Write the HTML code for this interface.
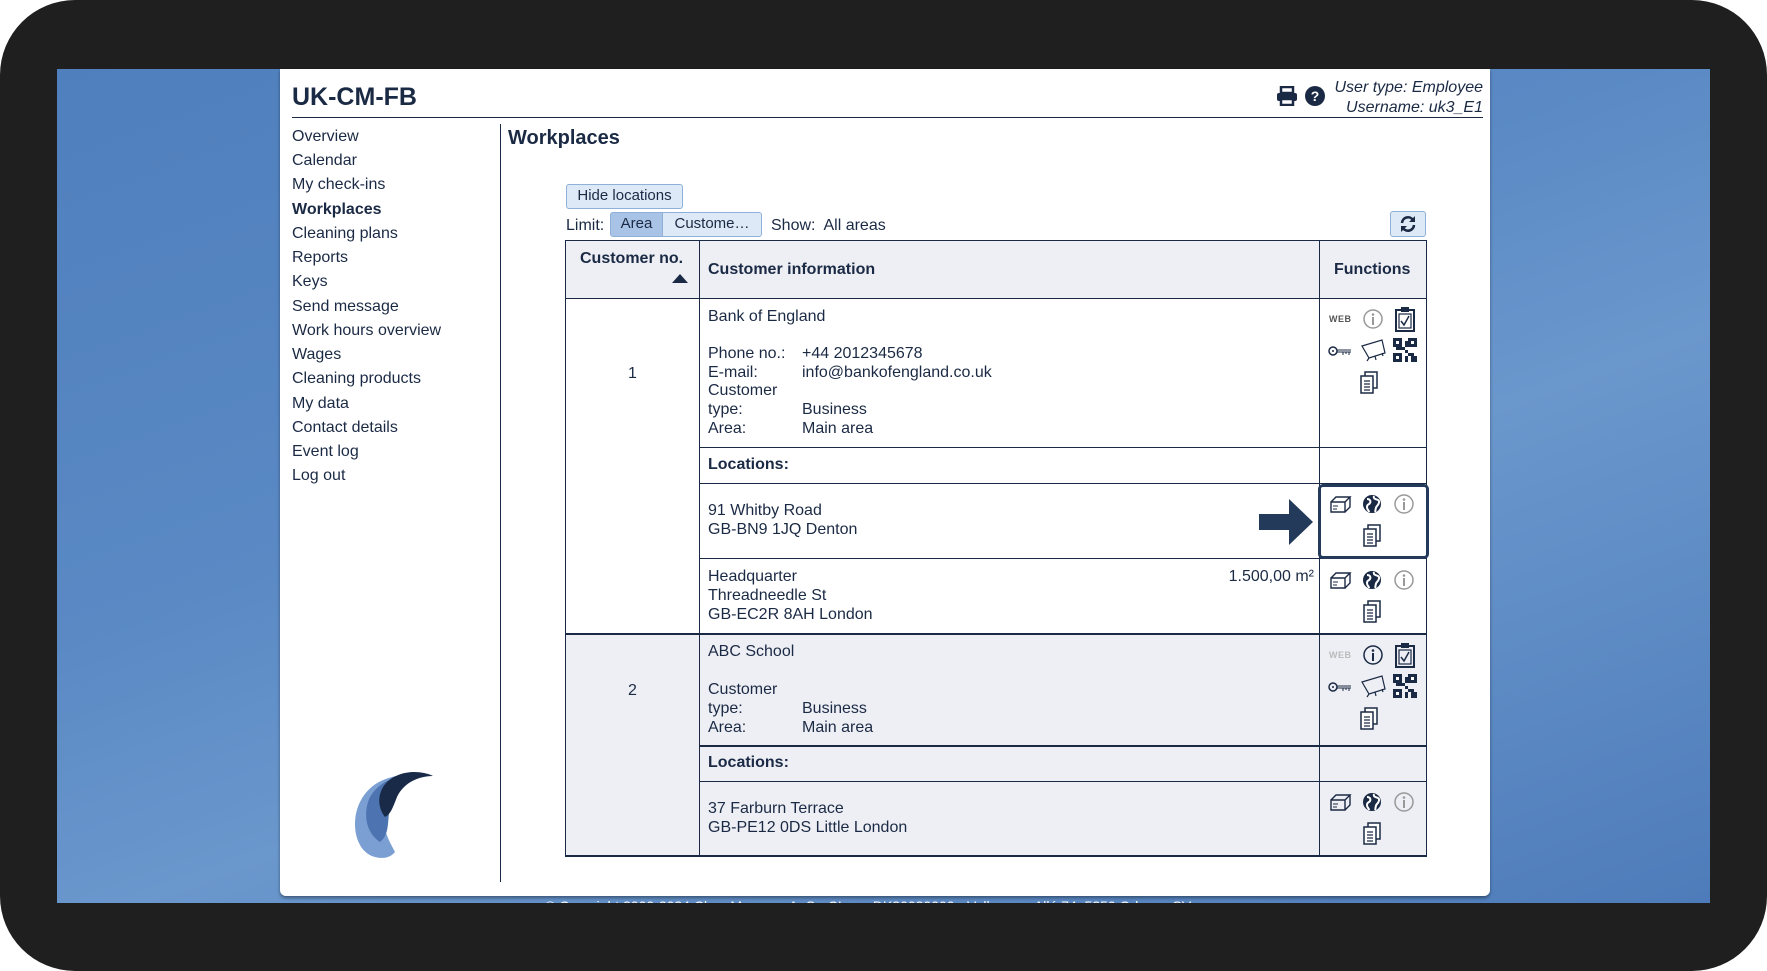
<!DOCTYPE html><html><head><meta charset="utf-8"><style>
*{margin:0;padding:0;box-sizing:border-box}
body{width:1767px;height:971px;background:#fff;position:relative;overflow:hidden;font-family:"Liberation Sans",sans-serif;color:#1b2a44}
.frame{position:absolute;left:0;top:0;width:1767px;height:971px;background:#201f20;border-radius:75px}
.blue{position:absolute;left:57px;top:69px;width:1653px;height:834px;overflow:hidden;background:linear-gradient(160deg,#4f7fbd 0%,#5a89c4 40%,#6a97cc 60%,#4e7cba 100%)}
.panel{position:absolute;left:280px;top:69px;width:1210px;height:827px;background:#fff;border-radius:0 0 6px 6px;box-shadow:0 2px 3px rgba(0,0,0,.4)}
.a{position:absolute;white-space:nowrap;font-size:16px;line-height:19px}
.t .a{transform:translateY(1px)}
.b{font-weight:bold}
.hl{position:absolute;background:#1b2a44}
.btn{position:absolute;border:1px solid #8fb0d8;background:#dde9f7;border-radius:3px;font-size:15px;line-height:22px;text-align:center}
.ic{position:absolute}
</style></head><body>
<div class="frame"></div>
<div class="blue"><div class="a" style="left:488px;top:828px;font-size:14px;color:#fff">© Copyright 2000-2024 CleanManager ApS - CI no.: DK30030000 - Vollsmose Allé 74, 5250 Odense SV</div></div>
<div class="panel"></div>
<div class="t">
<div class="a b" style="left:292px;top:82px;font-size:25px;line-height:28px">UK-CM-FB</div>
<div class="a" style="right:284px;top:77px;font-style:italic;font-size:16px;text-align:right">User type: Employee</div>
<div class="a" style="right:284px;top:97px;font-style:italic;font-size:16px">Username: uk3_E1</div>
<div class="a" style="left:292px;top:126px">Overview</div>
<div class="a" style="left:292px;top:150px">Calendar</div>
<div class="a" style="left:292px;top:174px">My check-ins</div>
<div class="a b" style="left:292px;top:199px">Workplaces</div>
<div class="a" style="left:292px;top:223px">Cleaning plans</div>
<div class="a" style="left:292px;top:247px">Reports</div>
<div class="a" style="left:292px;top:271px">Keys</div>
<div class="a" style="left:292px;top:296px">Send message</div>
<div class="a" style="left:292px;top:320px">Work hours overview</div>
<div class="a" style="left:292px;top:344px">Wages</div>
<div class="a" style="left:292px;top:368px">Cleaning products</div>
<div class="a" style="left:292px;top:393px">My data</div>
<div class="a" style="left:292px;top:417px">Contact details</div>
<div class="a" style="left:292px;top:441px">Event log</div>
<div class="a" style="left:292px;top:465px">Log out</div>
<div class="a b" style="left:508px;top:125px;font-size:20px;line-height:24px">Workplaces</div>
</div>
<div class="hl" style="left:292px;top:117px;width:1191px;height:1px"></div>
<svg class="ic" style="left:1276px;top:86px" width="22" height="20" viewBox="0 0 22 20"><rect x="5" y="1" width="12" height="6" fill="none" stroke="#1b2a44" stroke-width="2.5"/><rect x="1" y="7" width="20" height="8" rx="2" fill="#1b2a44"/><rect x="5" y="13" width="12" height="6" fill="#fff" stroke="#1b2a44" stroke-width="2.5"/></svg>
<svg class="ic" style="left:1305px;top:86px" width="20" height="20"><circle cx="10" cy="10" r="10" fill="#1b2a44"/><text x="10" y="15" font-size="14" font-weight="bold" fill="#fff" text-anchor="middle" font-family="Liberation Sans">?</text></svg>
<div class="hl" style="left:500px;top:124px;width:1px;height:758px"></div>
<svg class="ic" style="left:345px;top:762px" width="92" height="98" viewBox="0 0 92 98"><path d="M30 95C10 90 5 60 15 40 25 20 45 10 85 12 60 10 45 25 40 45 35 65 45 80 50 90 45 96 38 97 30 95Z" fill="#7b9fd3"/><path d="M35 80C20 70 18 50 25 35 35 18 55 10 85 14 62 14 48 28 45 45 42 60 45 72 35 80Z" fill="#4d74b0"/><path d="M40 55C32 45 32 30 42 20 55 8 75 8 88 14 72 14 58 22 52 35 48 45 46 52 40 55Z" fill="#182a48"/></svg>
<div class="btn" style="left:566px;top:184px;width:117px;height:25px">Hide locations</div>
<div class="a" style="left:566px;top:216px">Limit:</div>
<div class="btn" style="left:610px;top:212px;width:53px;height:25px;background:#a8c3e6;border-radius:3px 0 0 3px">Area</div>
<div class="btn" style="left:662px;top:212px;width:100px;height:25px;border-radius:0 3px 3px 0">Custome…</div>
<div class="a" style="left:771px;top:216px">Show:&nbsp; All areas</div>
<div class="btn" style="left:1390px;top:211px;width:36px;height:26px"></div>
<svg class="ic" style="left:1399px;top:215px" width="18" height="18" viewBox="0 0 18 18"><path d="M3 8A6 6 0 0 1 14 5M15 10A6 6 0 0 1 4 13" fill="none" stroke="#1b2a44" stroke-width="2.6"/><path d="M16 1v6h-6z M2 17v-6h6z" fill="#1b2a44"/></svg>
<div style="position:absolute;left:565px;top:240px;width:862px;height:58px;background:#eeeff5"></div>
<div style="position:absolute;left:565px;top:633px;width:862px;height:224px;background:#eeeff5"></div>
<div style="position:absolute;left:565px;top:240px;width:862px;height:617px;border:1px solid #1b2a44;border-bottom-width:2px"></div>
<div class="hl" style="left:699px;top:240px;width:1px;height:617px"></div>
<div class="hl" style="left:1319px;top:240px;width:1px;height:617px"></div>
<div class="hl" style="left:565px;top:298px;width:862px;height:1px"></div>
<div class="hl" style="left:699px;top:447px;width:728px;height:1px"></div>
<div class="hl" style="left:699px;top:483px;width:728px;height:1px"></div>
<div class="hl" style="left:699px;top:558px;width:728px;height:1px"></div>
<div class="hl" style="left:565px;top:633px;width:862px;height:2px"></div>
<div class="hl" style="left:699px;top:745px;width:728px;height:2px"></div>
<div class="hl" style="left:699px;top:781px;width:728px;height:1px"></div>
<svg class="ic" style="left:672px;top:273px" width="16" height="10"><path d="M0 10L8 1 16 10Z" fill="#1b2a44"/></svg>
<div class="t">
<div class="a b" style="left:580px;top:248px">Customer no.</div>
<div class="a b" style="left:708px;top:259px">Customer information</div>
<div class="a b" style="left:1334px;top:259px">Functions</div>
<div class="a" style="left:628px;top:363px">1</div>
<div class="a" style="left:628px;top:680px">2</div>
<div class="a" style="left:708px;top:306px">Bank of England</div>
<div class="a" style="left:708px;top:343px">Phone no.:</div><div class="a" style="left:802px;top:343px">+44 2012345678</div>
<div class="a" style="left:708px;top:362px">E-mail:</div><div class="a" style="left:802px;top:362px">info@bankofengland.co.uk</div>
<div class="a" style="left:708px;top:380px">Customer</div>
<div class="a" style="left:708px;top:399px">type:</div><div class="a" style="left:802px;top:399px">Business</div>
<div class="a" style="left:708px;top:418px">Area:</div><div class="a" style="left:802px;top:418px">Main area</div>
<div class="a b" style="left:708px;top:454px">Locations:</div>
<div class="a" style="left:708px;top:500px">91 Whitby Road</div>
<div class="a" style="left:708px;top:519px">GB-BN9 1JQ Denton</div>
<div class="a" style="left:708px;top:566px">Headquarter</div>
<div class="a" style="right:453px;top:566px">1.500,00 m²</div>
<div class="a" style="left:708px;top:585px">Threadneedle St</div>
<div class="a" style="left:708px;top:604px">GB-EC2R 8AH London</div>
<div class="a" style="left:708px;top:641px">ABC School</div>
<div class="a" style="left:708px;top:679px">Customer</div>
<div class="a" style="left:708px;top:698px">type:</div><div class="a" style="left:802px;top:698px">Business</div>
<div class="a" style="left:708px;top:717px">Area:</div><div class="a" style="left:802px;top:717px">Main area</div>
<div class="a b" style="left:708px;top:752px">Locations:</div>
<div class="a" style="left:708px;top:798px">37 Farburn Terrace</div>
<div class="a" style="left:708px;top:817px">GB-PE12 0DS Little London</div>
</div>
<div style="position:absolute;left:1318px;top:484px;width:111px;height:75px;border:3px solid #243a5a;border-radius:5px"></div>
<svg class="ic" style="left:1259px;top:499px" width="54" height="46"><path d="M0 15H30V0L54 23 30 46V31H0Z" fill="#243a5a"/></svg>
<div id="icons"></div>
<script>
var doc='<svg width="22" height="24" viewBox="0 0 22 24"><rect x="7" y="1" width="12" height="16" fill="#fff" stroke="#1b2a44" stroke-width="1.5"/><rect x="3" y="5" width="12" height="17" fill="#fff" stroke="#1b2a44" stroke-width="1.5"/><path d="M6 10h6M6 13h6M6 16h6M6 19h6" stroke="#1b2a44" stroke-width="1.3"/></svg>';
var info=function(c){return '<svg width="22" height="22"><circle cx="11" cy="11" r="9" fill="none" stroke="'+c+'" stroke-width="1.5"/><circle cx="11" cy="6.5" r="1.3" fill="'+c+'"/><path d="M11 9v8" stroke="'+c+'" stroke-width="2"/></svg>'};
var box='<svg width="24" height="20" viewBox="0 0 24 20"><path d="M2 8h14v10H2zM2 8l5-5h14l-5 5M16 18l5-5V3" fill="none" stroke="#1b2a44" stroke-width="1.4"/><path d="M4 12h5M4 15h4" stroke="#1b2a44"/></svg>';
var globe='<svg width="20" height="20"><circle cx="10" cy="10" r="9" fill="#1b2a44"/><path d="M5 5c3 0 4 2 3 4s-3 1-3 4 2 3 2 5M12 2c-1 3 2 3 4 4s1 4-1 6-1 4-2 6" fill="none" stroke="#fff" stroke-width="2"/></svg>';
var clip='<svg width="22" height="26" viewBox="0 0 22 26"><rect x="2" y="4" width="18" height="21" fill="none" stroke="#1b2a44" stroke-width="2"/><rect x="7" y="1" width="8" height="5" fill="#1b2a44"/><rect x="5" y="8" width="12" height="14" fill="none" stroke="#1b2a44" stroke-width="1.2"/><path d="M7 15l3 4 5-9" fill="none" stroke="#1b2a44" stroke-width="1.5"/></svg>';
var key='<svg width="24" height="12"><circle cx="5" cy="6" r="4" fill="none" stroke="#1b2a44" stroke-width="1.5"/><circle cx="5" cy="6" r="1" fill="#1b2a44"/><path d="M9 5h14M9 7h14M15 7v3M18 7v2M21 7v3" stroke="#1b2a44" stroke-width="1"/></svg>';
var map='<svg width="26" height="24"><path d="M2 8l20-6 3 13-16 5zM9 20l-2 3M15 18l1 4M22 15l1 3" fill="none" stroke="#1b2a44" stroke-width="1.2"/></svg>';
var qr='<svg width="24" height="24" viewBox="0 0 8 8" shape-rendering="crispEdges"><path d="M0 0h3v3H0zM5 0h3v3H5zM0 5h3v3H0zM4 4h1v1H4zM5 5h2v1H5zM6 6h2v2H6zM4 6h1v2H4zM3 3h1v1H3zM4 1h1v2H4zM1 3h2v1H1z" fill="#1b2a44"/><path d="M1 1h1v1H1zM6 1h1v1H6zM1 6h1v1H1z" fill="#fff"/></svg>';
var web=function(c){return '<div style="font-size:9px;font-weight:bold;color:'+c+';letter-spacing:.5px;line-height:10px">WEB</div>'};
var out='';
function p(x,y,s,w,h){out+='<div class="ic" style="left:'+(x-w/2)+'px;top:'+(y-h/2)+'px">'+s+'</div>'}
function cust(y,wc,ic){p(1341,y,web(wc),24,10);p(1373,y,info(ic),22,22);p(1405,y,clip,22,26);p(1340,y+31,key,24,12);p(1373,y+31,map,26,24);p(1405,y+31,qr,24,24);p(1369,y+64,doc,22,24)}
function loc(y){p(1341,y,box,24,20);p(1372,y,globe,20,20);p(1404,y,info('#999'),22,22);p(1372,y+32,doc,22,24)}
cust(319,'#555','#999');cust(655,'#bbb','#1b2a44');loc(504);loc(580);loc(802);
document.getElementById('icons').innerHTML=out;
</script>
</body></html>
